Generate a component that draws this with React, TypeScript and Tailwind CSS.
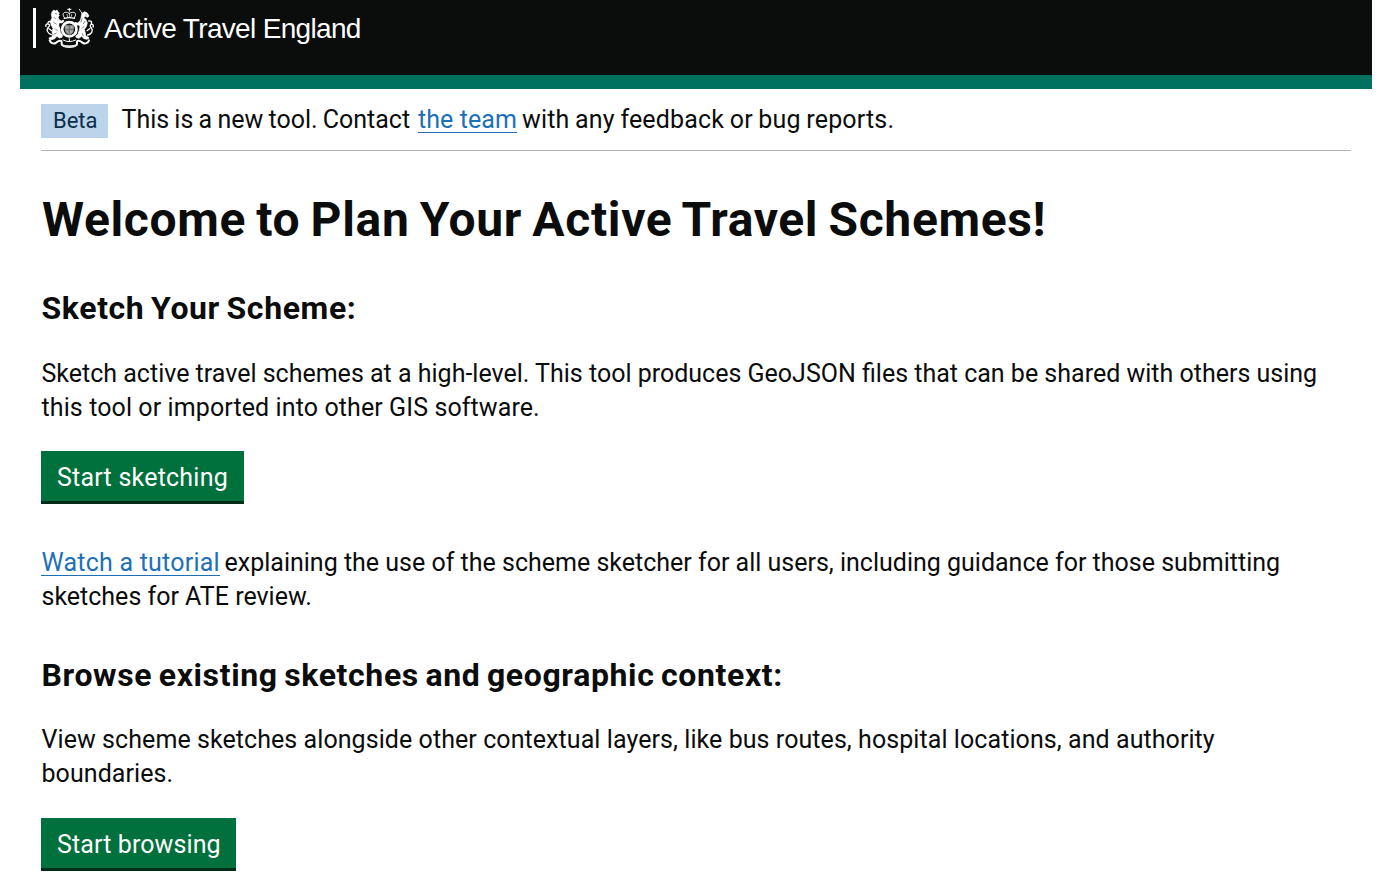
import type { ReactNode } from "react";

function Crest() {
  return (
    <svg className="h-[41px] w-[50px] shrink-0" viewBox="75 24 150 123" fill="none" stroke="#fff" strokeLinecap="round" strokeLinejoin="round" aria-hidden="true">
      {/* crown */}
      <path d="M148 24v10M143 28h10" strokeWidth="3" />
      <path d="M133 53c-8-11-2-17 6-16 5 0 9 4 9 4s4-4 9-4c8-1 14 5 6 16" strokeWidth="3" />
      <path d="M148 38v14M141 43l2 9M155 43l-2 9" strokeWidth="2" />
      <path d="M133 55q15-4 30 0" strokeWidth="4" />
      {/* garter and shield */}
      <circle cx="148" cy="88" r="21.5" strokeWidth="8" />
      <path d="M135 76h26v14q-2 11-13 15q-11-4-13-15z" fill="#8c8e8e" strokeWidth="1" stroke="#a9aaaa" />
      <path d="M148 76v27M136 88h24" stroke="#4a4c4c" strokeWidth="1.5" />
      <path d="M140 80v5M144 81v4M153 80l4 5M157 80l-4 5M140 92l4 5M152 93v6M156 92v5" stroke="#d8d8d8" strokeWidth="1.5" />
      {/* lion */}
      <path d="M97 34l5-4 4 3 5-3 3 5 4 4-2 4 2 4-4 4 3 8 8 4 5-3 2 4-6 5-8-1-2 8 4 11 1 10 7 9-2 6-8 2-7-5-7 7-11 4-6-3 1-4 8-2 2-7-2-8 3-11-6-10-1-12 4-10-2-9z" fill="#fff" strokeWidth="2" />
      <path d="M106 40l4 2M102 52l5 5M101 67l8 5M106 86l7 7M102 103l7-4" stroke="#0b0c0c" strokeWidth="1.5" />
      <path d="M94 104c-12-4-16-15-9-22 6-5 4-10-1-10-5-1-8 4-6 7M84 68c3-5 8-4 9-1M95 92l-8-6" strokeWidth="4" />
      {/* unicorn */}
      <path d="M178 28l9 13" strokeWidth="2.5" />
      <path d="M186 40l8-5 8 4 5 9-4 4-7-3-5 4 7 6 4 10-3 11-6 8 3 11 1 9 8 3 2 4-6 3-9-2-7-7-8 6-8-2-2-5 7-6 4-12 2-11-5-4-8 1-5-5 3-4 8 2 7-6 3-9z" fill="#fff" strokeWidth="2" />
      <path d="M198 45l1 0M186 56l-3 10M195 64l-5 7M187 84l5-5M187 101l3 7" stroke="#0b0c0c" strokeWidth="1.5" />
      <path d="M203 105c13-3 17-13 11-21-5-6-4-10 0-11 5-1 8 4 5 8M206 63c8-1 10 3 8 7M201 92l8-6" strokeWidth="4" />
      {/* motto ribbon */}
      <path d="M89 121c3 9 12 11 18 8 5-3 7-8 14-7 7 0 2 8 5 13 10 6 34 6 44 0 3-5-2-13 5-13 7-1 9 4 14 7 6 3 15 1 18-8" strokeWidth="6" />
      <path d="M129 120q19 10 38 0M148 116v9" strokeWidth="3" />
      <path d="M131 138q17 5 34 0" stroke="#e5e5e5" strokeWidth="7" />
    </svg>
  );
}

function TextLink({ children, className }: { children: ReactNode; className: string }) {
  return (
    <a href="#" className={`inline-block h-[30px] border-b border-[#1d70b8] leading-[34px] text-[#1d70b8] ${className}`}>
      {children}
    </a>
  );
}

function StartButton({ children, className }: { children: ReactNode; className: string }) {
  return (
    <button type="button" className={`block h-[53px] whitespace-nowrap border-b-3 border-[#002d18] bg-[#00703c] pl-4 pt-0.5 text-left text-[25px] leading-[50px] text-white ${className}`}>
      {children}
    </button>
  );
}

export default function App() {
  return (
    <div className="h-[875px] overflow-hidden bg-white pl-5 pr-[13px] font-['Roboto',sans-serif] text-[25px] leading-[34px] text-[#0b0c0c]">
      <header className="flex h-[89px] items-start border-b-14 border-[#00705f] bg-[#0b0c0c] pl-[13px] pt-2">
        <div className="h-10 w-[2.5px] shrink-0 bg-white" />
        <div className="ml-[9.5px]">
          <Crest />
        </div>
        <span className="ml-[9px] mt-[5px] whitespace-nowrap font-['Liberation_Sans',sans-serif] text-[28px] leading-8 tracking-[-0.67px] text-white">
          Active Travel England
        </span>
      </header>

      <main className="mx-[21px] whitespace-nowrap">
        <div className="flex h-[62px] items-start border-b border-[#b1b4b6] pt-3.5">
          <strong className="mt-px h-[34px] w-[67px] bg-[#bbd4ea] pl-3 text-[22px] font-normal leading-[34px] text-[#0c2d4a]">
            Beta
          </strong>
          <p className="ml-[13.5px] flex">
            <span className="w-[296.5px] tracking-[-0.02px] [word-spacing:-0.9px]">This is a new tool. Contact</span>
            <TextLink className="w-[99px] tracking-[0.08px]">the team</TextLink>
            <span className="ml-[5px] tracking-[0.17px] [word-spacing:-0.8px]">with any feedback or bug reports.</span>
          </p>
        </div>

        <h1 className="mt-11 pl-px text-[48px] font-bold leading-[50px] tracking-[0.65px] [word-spacing:-2.3px]">
          Welcome to Plan Your Active Travel Schemes!
        </h1>

        <section className="mt-[46px]">
          <h2 className="pl-[0.5px] text-[32px] font-bold leading-[35px] tracking-[0.62px] [word-spacing:-2px]">Sketch Your Scheme:</h2>
          <p className="mt-[31px] pl-[0.5px]">
            Sketch active travel schemes at a high-level. This tool produces GeoJSON files that can be shared with others using
            <br />
            <span className="tracking-[0.1px]">this tool or imported into other GIS software.</span>
          </p>
          <div className="mt-[26px]">
            <StartButton className="w-[203px] tracking-[0.22px]">Start sketching</StartButton>
          </div>
          <div className="mt-[42px]">
            <p className="flex">
              <TextLink className="w-[179px] pl-[0.5px] tracking-[0.22px]">Watch a tutorial</TextLink>
              <span className="ml-[4.5px]">
                explaining the use of the scheme sketcher for all users, including guidance for those submitting
              </span>
            </p>
            <p className="pl-[0.5px]">sketches for ATE review.</p>
          </div>
        </section>

        <section className="mt-11">
          <h2 className="pl-[0.5px] text-[32px] font-bold leading-[35px] tracking-[0.62px] [word-spacing:-2px]">
            Browse existing sketches and geographic context:
          </h2>
          <p className="mt-[30px] pl-[0.5px] tracking-[0.07px]">
            View scheme sketches alongside other contextual layers, like bus routes, hospital locations, and authority
            <br />
            boundaries.
          </p>
          <div className="mt-[27px]">
            <StartButton className="w-[195px] tracking-[0.11px]">Start browsing</StartButton>
          </div>
        </section>
      </main>
    </div>
  );
}
